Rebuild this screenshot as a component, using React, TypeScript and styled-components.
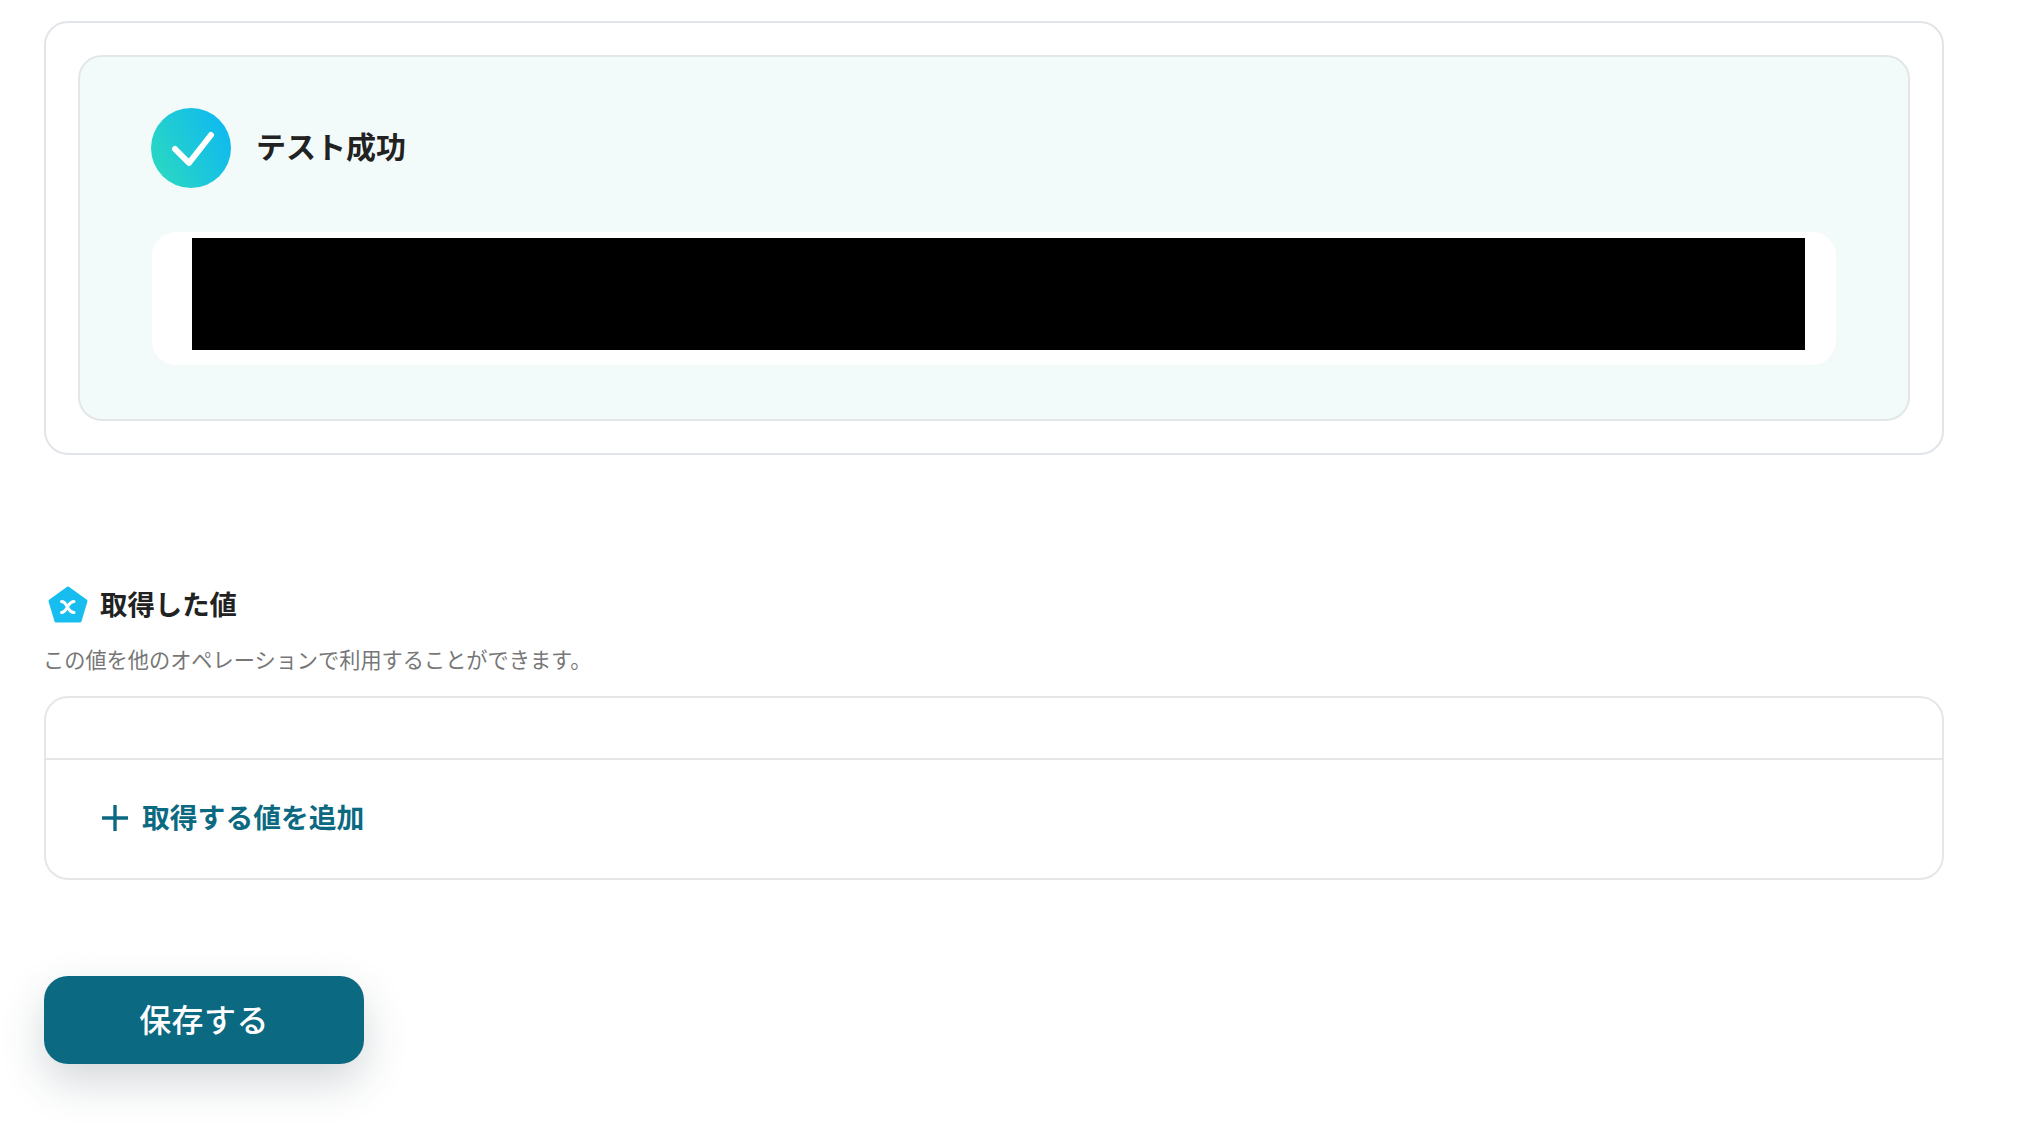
import { createGlobalStyle, styled } from "styled-components";

const GlobalStyle = createGlobalStyle`
  html, body {
    margin: 0;
    padding: 0;
    background: #ffffff;
  }

  body {
    font-family: "Noto Sans CJK JP", "Noto Sans", sans-serif;
    color: #222222;
  }

  * {
    box-sizing: border-box;
  }
`;

function CheckBadge() {
  return (
    <svg width="80" height="80" viewBox="0 0 80 80">
      <defs>
        <linearGradient id="successGradient" x1="0" y1="0.8" x2="1" y2="0.3">
          <stop offset="0" stopColor="#2bd9c0" />
          <stop offset="1" stopColor="#0fb9f0" />
        </linearGradient>
      </defs>
      <circle cx="40" cy="40" r="40" fill="url(#successGradient)" />
      <path
        d="M24 41 L38 55 L60 27"
        fill="none"
        stroke="#ffffff"
        strokeWidth="6"
        strokeLinecap="round"
        strokeLinejoin="round"
      />
    </svg>
  );
}

function VariableIcon() {
  return (
    <svg width="40" height="40" viewBox="0 0 40 40">
      <path
        d="M20 2 L38 15 L32 35 L8 35 L2 15 Z"
        fill="#17bdee"
        stroke="#17bdee"
        strokeWidth="3"
        strokeLinejoin="round"
      />
      <path
        d="M13.5 15.5 C17 15.5 17.5 18 19.5 21 C21.5 24 22 26.5 26 26.5 M26 15.5 C22 15.5 21.5 18 19.5 21 C17.5 24 17 26.5 13.5 26.5"
        fill="none"
        stroke="#ffffff"
        strokeWidth="3"
        strokeLinecap="round"
      />
    </svg>
  );
}

function PlusIcon() {
  return (
    <svg width="26" height="26" viewBox="0 0 26 26">
      <path d="M13 0 V26 M0 13 H26" stroke="#0b6982" strokeWidth="3.4" />
    </svg>
  );
}

export default function App() {
  return (
    <>
      <GlobalStyle />
      <Page>
        <Card>
          <ResultPanel>
            <ResultHeader>
              <BadgeWrapper>
                <CheckBadge />
              </BadgeWrapper>
              <ResultTitle>テスト成功</ResultTitle>
            </ResultHeader>
            <ResponseBox>
              <Redacted />
            </ResponseBox>
          </ResultPanel>
        </Card>

        <SectionHeader>
          <VariableIcon />
          <SectionTitle>取得した値</SectionTitle>
        </SectionHeader>
        <SectionDesc>この値を他のオペレーションで利用することができます。</SectionDesc>

        <ValueTable>
          <EmptyRow />
          <AddRow>
            <PlusIcon />
            <AddLabel>取得する値を追加</AddLabel>
          </AddRow>
        </ValueTable>

        <SaveButton>保存する</SaveButton>
      </Page>
    </>
  );
}

const Page = styled.div`
  width: 2020px;
  height: 1138px;
  padding: 21px 76px 0 44px;
  overflow: hidden;
  display: flex;
  flex-direction: column;
  align-items: flex-start;
`;

const Card = styled.div`
  width: 100%;
  padding: 32px;
  background: #ffffff;
  border: 2px solid #e1e5ea;
  border-radius: 24px;
`;

const ResultPanel = styled.div`
  padding: 51px 72px 54px;
  background: #f2fbfa;
  border: 2px solid #e3e6e9;
  border-radius: 24px;
`;

const ResultHeader = styled.div`
  display: flex;
  align-items: center;
  gap: 25px;
  height: 80px;
  margin-left: -1px;
`;

const BadgeWrapper = styled.div`
  display: flex;
  width: 80px;
  height: 80px;
`;

const ResultTitle = styled.h2`
  margin: 0 0 7px;
  font-size: 30px;
  line-height: 44px;
  font-weight: 600;
  color: #222222;
`;

const ResponseBox = styled.div`
  margin-top: 44px;
  padding: 6px 31px 15px 40px;
  background: #ffffff;
  border-radius: 24px;
`;

const Redacted = styled.div`
  height: 112px;
  background: #000000;
`;

const SectionHeader = styled.div`
  display: flex;
  align-items: center;
  gap: 12px;
  height: 40px;
  margin-top: 131px;
  margin-left: 4px;
`;

const SectionTitle = styled.h3`
  margin: 0 0 6px;
  font-size: 27.4px;
  line-height: 40px;
  font-weight: 600;
  color: #222222;
`;

const SectionDesc = styled.p`
  margin: 18px 0 0 -1px;
  font-size: 21.2px;
  line-height: 30px;
  font-weight: 400;
  color: #777777;
`;

const ValueTable = styled.div`
  width: 100%;
  margin-top: 22px;
  background: #ffffff;
  border: 2px solid #e6e6e6;
  border-radius: 24px;
`;

const EmptyRow = styled.div`
  height: 62px;
  border-bottom: 2px solid #e6e6e6;
`;

const AddRow = styled.div`
  display: flex;
  align-items: center;
  gap: 14px;
  height: 118px;
  padding: 0 0 3px 56px;
`;

const AddLabel = styled.span`
  margin-bottom: 3px;
  font-size: 27.8px;
  line-height: 40px;
  font-weight: 600;
  color: #0b6982;
`;

const SaveButton = styled.button`
  width: 320px;
  height: 88px;
  margin-top: 96px;
  padding: 0 0 4px;
  border: none;
  border-radius: 24px;
  background: #0b6982;
  color: #ffffff;
  font-family: inherit;
  font-size: 32px;
  font-weight: 500;
  letter-spacing: 0.4px;
  box-shadow: 0 18px 44px rgba(40, 60, 70, 0.2);
  cursor: pointer;
`;
